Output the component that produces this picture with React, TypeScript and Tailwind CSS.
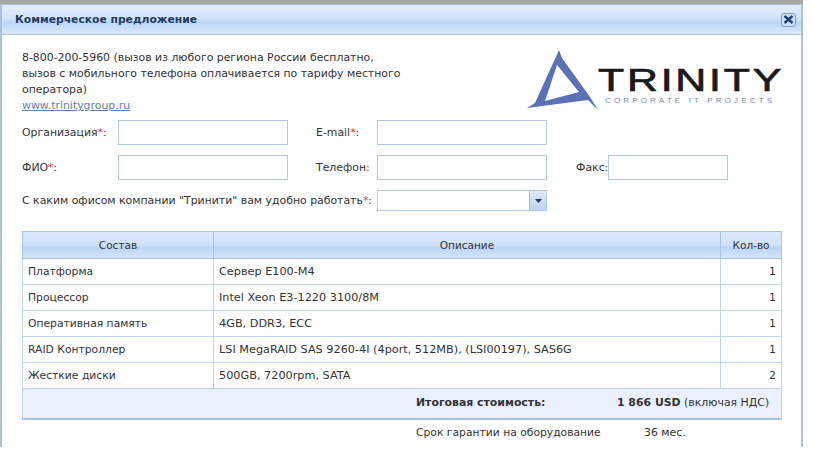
const rows = [
  ["Платформа", "Сервер E100-M4", "1"],
  ["Процессор", "Intel Xeon E3-1220 3100/8M", "1"],
  ["Оперативная память", "4GB, DDR3, ECC", "1"],
  ["RAID Контроллер", "LSI MegaRAID SAS 9260-4I (4port, 512MB), (LSI00197), SAS6G", "1"],
  ["Жесткие диски", "500GB, 7200rpm, SATA", "2"],
];

const Star = () => <span className="text-[#e8303a]">*</span>;
const Field = ({ w }: { w: string }) => (
  <input className={`${w} h-[25px] border border-[#b3c9e0] bg-white`} readOnly />
);

export default function App() {
  return (
    <div className="w-[813px] h-[455px] overflow-hidden bg-white text-[10.9px] leading-4 text-[#333] font-['DejaVu_Sans',sans-serif]">
      <div className="w-[803px] h-[4px] bg-[#a6a6a6]" />
      <div className="w-[803px] h-[443px] border-x-2 border-t border-x-[#a9c2e0] border-t-[#a9c2e0] flex flex-col">
        <div className="h-[30px] shrink-0 flex items-center justify-between pl-[13px] pr-[5px] border-b border-[#a9c2e0] bg-[linear-gradient(180deg,#e3eefc_0%,#d2e4fa_45%,#bdd6f6_60%,#dbe8fb_100%)]">
          <span className="font-bold text-[10.75px] text-[#1f3a5f]">Коммерческое предложение</span>
          <span className="w-[15px] h-[14px] rounded-[3px] border border-[#7f9cc4] bg-[#cfe0f6] flex items-center justify-center">
            <svg width="11" height="9" viewBox="0 0 11 9">
              <path d="M1.5 1 L9.5 8 M9.5 1 L1.5 8" stroke="#1d3f78" strokeWidth="2.4" />
            </svg>
          </span>
        </div>

        <div className="h-[85px] shrink-0 flex pl-[20px]">
          <div className="w-[498px] pt-[15px] whitespace-nowrap">
            8-800-200-5960 (вызов из любого региона России бесплатно,
            <br />
            вызов с мобильного телефона оплачивается по тарифу местного
            <br />
            оператора)
            <br />
            <a className="text-[#5b83b8] underline">www.trinitygroup.ru</a>
          </div>
          <svg className="mt-[11px]" width="265" height="66" viewBox="520 46 265 66">
            <path
              fillRule="evenodd"
              fill="#5b70b5"
              d="M559 50 L562 58 L590 97 L598 110 L588 100 L527 108 L535 103 Z M557 65 L545 101 L579 92 Z"
            />
            <text x="598" y="91" fontFamily="'Liberation Sans',sans-serif" fontSize="31" fill="#1a1a1a" stroke="#1a1a1a" strokeWidth="0.7" letterSpacing="2" textLength="186" lengthAdjust="spacingAndGlyphs">TRINITY</text>
            <text x="605" y="103" fontFamily="'Liberation Sans',sans-serif" fontSize="8" fill="#7d8ba8" textLength="167" lengthAdjust="spacing">CORPORATE IT PROJECTS</text>
          </svg>
        </div>

        <div className="pl-[20px] flex flex-col">
          <div className="flex items-center">
            <span className="w-[96px]">Организация<Star />:</span>
            <Field w="w-[170px]" />
            <span className="w-[61px] ml-[28px]">E-mail<Star />:</span>
            <Field w="w-[170px]" />
          </div>
          <div className="flex items-center mt-[10px]">
            <span className="w-[96px]">ФИО<Star />:</span>
            <Field w="w-[170px]" />
            <span className="w-[61px] ml-[28px]">Телефон:</span>
            <Field w="w-[170px]" />
            <span className="w-[32px] ml-[29px] whitespace-nowrap">Факс:</span>
            <Field w="w-[120px]" />
          </div>
          <div className="flex items-center mt-[10px] h-[21px]">
            <span className="w-[355px] whitespace-nowrap">С каким офисом компании "Тринити" вам удобно работать<Star />:</span>
            <div className="w-[170px] h-[21px] border border-[#b3c9e0] bg-white flex justify-end">
              <span className="w-[17px] h-full bg-[linear-gradient(180deg,#dce9fa,#bcd4f3)] border-l border-[#9fbbdd] flex items-center justify-center">
                <svg width="7" height="4" viewBox="0 0 7 4"><path d="M0 0 H7 L3.5 4 Z" fill="#1f3a5f" /></svg>
              </span>
            </div>
          </div>
        </div>

        <table className="ml-[20px] mt-[20px] w-[759px] table-fixed border-collapse">
          <colgroup>
            <col className="w-[191px]" />
            <col className="w-[507px]" />
            <col className="w-[61px]" />
          </colgroup>
          <thead>
            <tr className="h-[27px] text-[10.5px] bg-[linear-gradient(180deg,#dde9fb_0%,#cfe2fa_45%,#bcd5f6_60%,#d8e7fb_100%)]">
              <th className="font-normal border border-[#a9c2e0]">Состав</th>
              <th className="font-normal border border-[#a9c2e0]">Описание</th>
              <th className="font-normal border border-[#a9c2e0]">Кол-во</th>
            </tr>
          </thead>
          <tbody>
            {rows.map((r) => (
              <tr key={r[0]} className="h-[26px]">
                <td className="border border-[#c2d5ec] pl-[5px] pt-[1px] text-[10.75px]">{r[0]}</td>
                <td className="border border-[#c2d5ec] pl-[5px] pt-[1px] whitespace-nowrap text-[11.25px]">{r[1]}</td>
                <td className="border border-[#c2d5ec] pr-[5px] pt-[1px] text-right">{r[2]}</td>
              </tr>
            ))}
            <tr className="h-[30px] bg-[#ebf1fc] border-x border-b-2 border-x-[#c2d5ec] border-b-[#a9c2e0]">
              <td colSpan={3} className="p-0">
                <div className="flex items-center pl-[393px] whitespace-nowrap">
                  <b className="w-[201px]">Итоговая стоимость:</b>
                  <span><b>1 866 USD</b> (включая НДС)</span>
                </div>
              </td>
            </tr>
          </tbody>
        </table>

        <div className="flex pl-[414px] mt-[5px] whitespace-nowrap">
          <span className="w-[228px] text-[10.75px]">Срок гарантии на оборудование</span>
          <span>36 мес.</span>
        </div>
      </div>
    </div>
  );
}
